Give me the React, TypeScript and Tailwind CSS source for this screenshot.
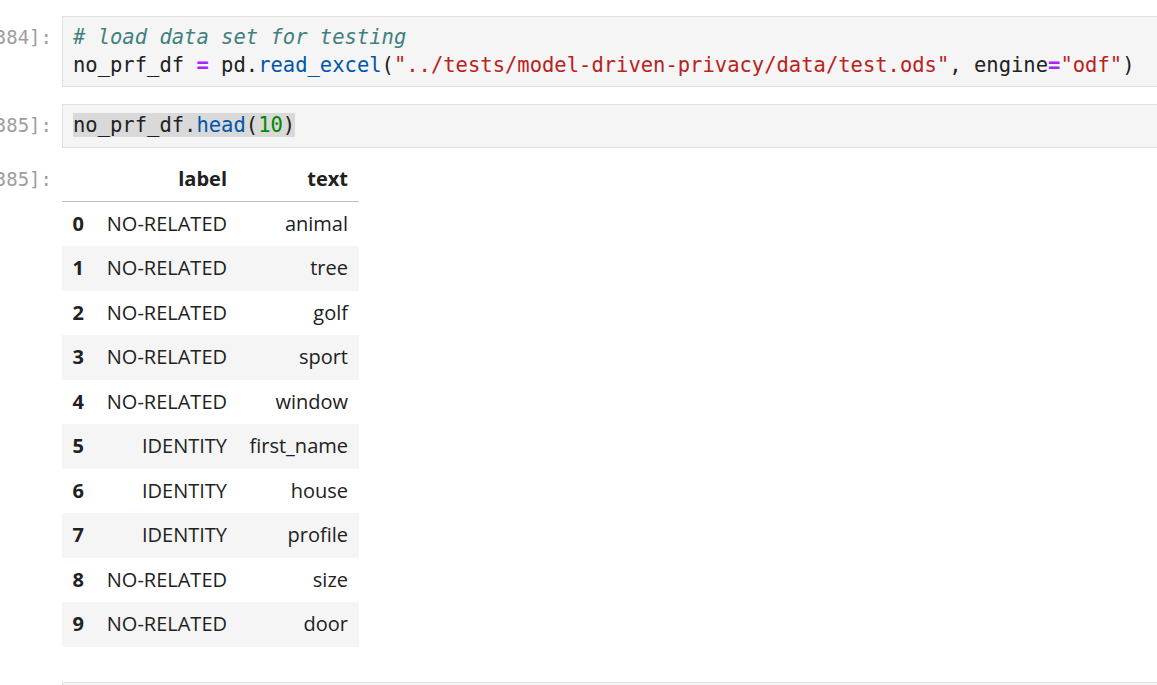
const rows: [string, string][] = [
  ["NO-RELATED", "animal"],
  ["NO-RELATED", "tree"],
  ["NO-RELATED", "golf"],
  ["NO-RELATED", "sport"],
  ["NO-RELATED", "window"],
  ["IDENTITY", "first_name"],
  ["IDENTITY", "house"],
  ["IDENTITY", "profile"],
  ["NO-RELATED", "size"],
  ["NO-RELATED", "door"],
];

const mono = "font-['DejaVu_Sans_Mono',monospace] text-[20.5px] leading-[27.6px]";

function Prompt({ text, top }: { text: string; top: string }) {
  return (
    <div className={`w-[62px] shrink-0 flex justify-end overflow-hidden pr-[10px] ${top}`}>
      <span className="font-['DejaVu_Sans_Mono',monospace] text-[19px] leading-[27.6px] shrink-0 whitespace-pre text-[#9e9e9e]">
        {text}
      </span>
    </div>
  );
}

function CodeCell({ prompt, children }: { prompt: string; children: React.ReactNode }) {
  return (
    <div className="flex">
      <Prompt text={prompt} top="pt-[8px]" />
      <div
        className={`flex-1 border border-[#e0e0e0] bg-[#f5f5f5] py-[7px] pl-[10px] text-[#212121] whitespace-pre ${mono}`}
      >
        {children}
      </div>
    </div>
  );
}

function DataFrame() {
  return (
    <table className="table-fixed w-[297px] border-collapse font-['Open_Sans',sans-serif] text-[20px] text-[#212121]">
      <colgroup>
        <col className="w-[32px]" />
        <col className="w-[143px]" />
        <col className="w-[122px]" />
      </colgroup>
      <thead>
        <tr className="h-[44.5px] border-b border-[#bdbdbd]">
          <th></th>
          <th className="text-right font-bold px-[10px]">label</th>
          <th className="text-right font-bold pl-[10px] pr-[11px]">text</th>
        </tr>
      </thead>
      <tbody>
        {rows.map(([label, text], i) => (
          <tr key={i} className={`h-[44.5px] ${i % 2 === 1 ? "bg-[#f5f5f5]" : "bg-white"}`}>
            <th className="text-right font-bold px-[10px]">{i}</th>
            <td className="text-right pl-[8px] pr-[10px] whitespace-nowrap">{label}</td>
            <td className="text-right pl-[10px] pr-[11px] whitespace-nowrap">{text}</td>
          </tr>
        ))}
      </tbody>
    </table>
  );
}

export default function App() {
  return (
    <div className="w-screen h-screen overflow-hidden bg-white">
      <div className="w-[1200px] pt-4 flex flex-col">
        <CodeCell prompt="[384]:">
          <div>
            <span className="italic text-[#408080]"># load data set for testing</span>
          </div>
          <div>
            no_prf_df <span className="font-bold text-[#aa22ff]">=</span> pd.
            <span className="text-[#0055aa]">read_excel</span>(
            <span className="text-[#ba2121]">"../tests/model-driven-privacy/data/test.ods"</span>, engine
            <span className="font-bold text-[#aa22ff]">=</span>
            <span className="text-[#ba2121]">"odf"</span>)
          </div>
        </CodeCell>

        <div className="mt-[16.8px]">
          <CodeCell prompt="[385]:">
            <span className="bg-[#d9d9d9]">
              no_prf_df.<span className="text-[#0055aa]">head</span>(<span className="text-[#008800]">10</span>)
            </span>
          </CodeCell>
        </div>

        <div className="mt-[9.6px] flex">
          <Prompt text="[385]:" top="pt-[9px]" />
          <DataFrame />
        </div>

        <div className="mt-[35.5px] flex">
          <div className="w-[62px] shrink-0" />
          <div className="flex-1 h-[60px] border border-[#e0e0e0] bg-[#f5f5f5]" />
        </div>
      </div>
    </div>
  );
}
